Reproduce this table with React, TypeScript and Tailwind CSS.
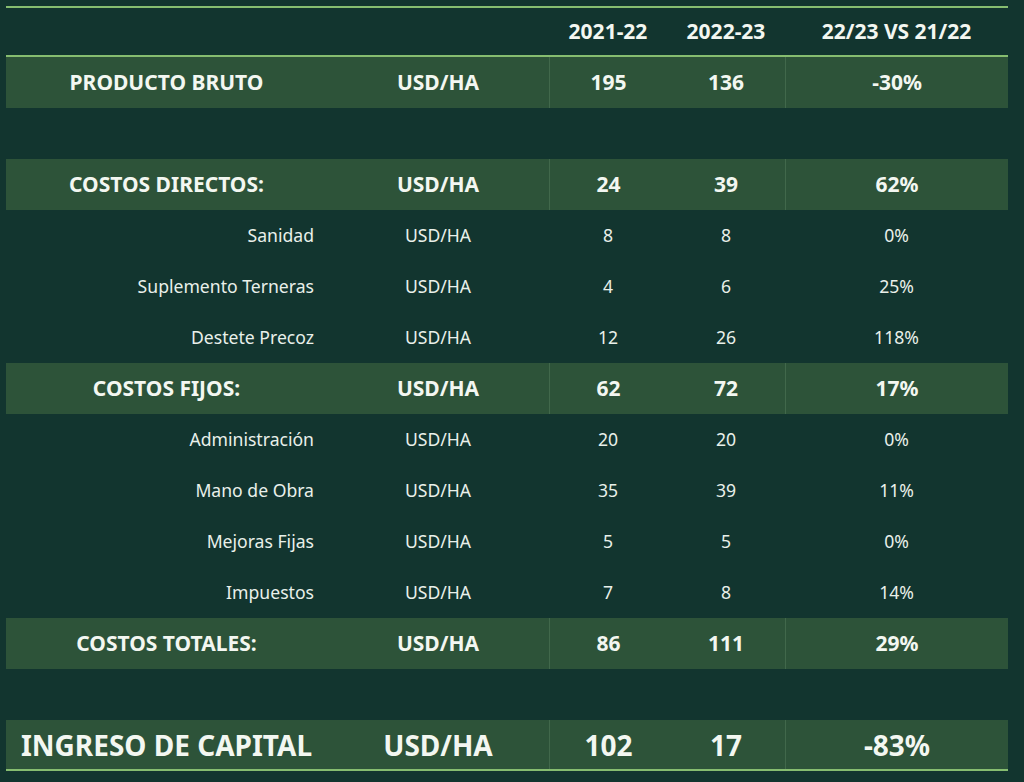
type Row = {
  label: string
  unit: string
  a: string
  b: string
  pct: string
  kind: 'main' | 'sub' | 'blank' | 'total'
}

const rows: Row[] = [
  { label: 'PRODUCTO BRUTO', unit: 'USD/HA', a: '195', b: '136', pct: '-30%', kind: 'main' },
  { label: '', unit: '', a: '', b: '', pct: '', kind: 'blank' },
  { label: 'COSTOS DIRECTOS:', unit: 'USD/HA', a: '24', b: '39', pct: '62%', kind: 'main' },
  { label: 'Sanidad', unit: 'USD/HA', a: '8', b: '8', pct: '0%', kind: 'sub' },
  { label: 'Suplemento Terneras', unit: 'USD/HA', a: '4', b: '6', pct: '25%', kind: 'sub' },
  { label: 'Destete Precoz', unit: 'USD/HA', a: '12', b: '26', pct: '118%', kind: 'sub' },
  { label: 'COSTOS FIJOS:', unit: 'USD/HA', a: '62', b: '72', pct: '17%', kind: 'main' },
  { label: 'Administración', unit: 'USD/HA', a: '20', b: '20', pct: '0%', kind: 'sub' },
  { label: 'Mano de Obra', unit: 'USD/HA', a: '35', b: '39', pct: '11%', kind: 'sub' },
  { label: 'Mejoras Fijas', unit: 'USD/HA', a: '5', b: '5', pct: '0%', kind: 'sub' },
  { label: 'Impuestos', unit: 'USD/HA', a: '7', b: '8', pct: '14%', kind: 'sub' },
  { label: 'COSTOS TOTALES:', unit: 'USD/HA', a: '86', b: '111', pct: '29%', kind: 'main' },
  { label: '', unit: '', a: '', b: '', pct: '', kind: 'blank' },
  { label: 'INGRESO DE CAPITAL', unit: 'USD/HA', a: '102', b: '17', pct: '-83%', kind: 'total' },
]

const cols = 'grid grid-cols-[321px_222px_118px_118px_223px]'

const TableRow = ({ row }: { row: Row }) => {
  if (row.kind === 'blank') return <div className="h-[51px]" />

  if (row.kind === 'sub') {
    return (
      <div className={`${cols} h-[51px] items-center text-[17.6px] text-[#e9f0ea]`}>
        <div className="text-right pr-[13px]">{row.label}</div>
        <div className="text-center">{row.unit}</div>
        <div className="text-center">{row.a}</div>
        <div className="text-center">{row.b}</div>
        <div className="text-center">{row.pct}</div>
      </div>
    )
  }

  const big = row.kind === 'total'
  const cell = 'flex items-center justify-center h-full border-l border-[#41684b]'
  return (
    <div
      className={`${cols} h-[51px] bg-[#2d5339] font-bold text-[#f3f7f1] ${
        big ? 'text-[28px] border-b-2 border-[#86bd70]' : 'text-[21px]'
      }`}
    >
      <div className="flex items-center justify-center h-full">{row.label}</div>
      <div className="flex items-center justify-center h-full">{row.unit}</div>
      <div className={cell}>{row.a}</div>
      <div className="flex items-center justify-center h-full">{row.b}</div>
      <div className={cell}>{row.pct}</div>
    </div>
  )
}

const App = () => {
  return (
    <div
      className="w-[1024px] h-[782px] bg-[#12352f] pt-[6px] pl-[6px] overflow-hidden"
      style={{ fontFamily: '"Noto Sans", "Open Sans", sans-serif' }}
    >
      <div className="w-[1002px] border-t-2 border-[#86bd70]">
        <div className={`${cols} h-[49px] items-center text-[21px] font-bold text-[#f3f7f1] border-b-2 border-[#86bd70]`}>
          <div />
          <div />
          <div className="text-center">2021-22</div>
          <div className="text-center">2022-23</div>
          <div className="text-center">22/23 VS 21/22</div>
        </div>
        {rows.map((r, i) => (
          <TableRow key={i} row={r} />
        ))}
      </div>
    </div>
  )
}

export default App
